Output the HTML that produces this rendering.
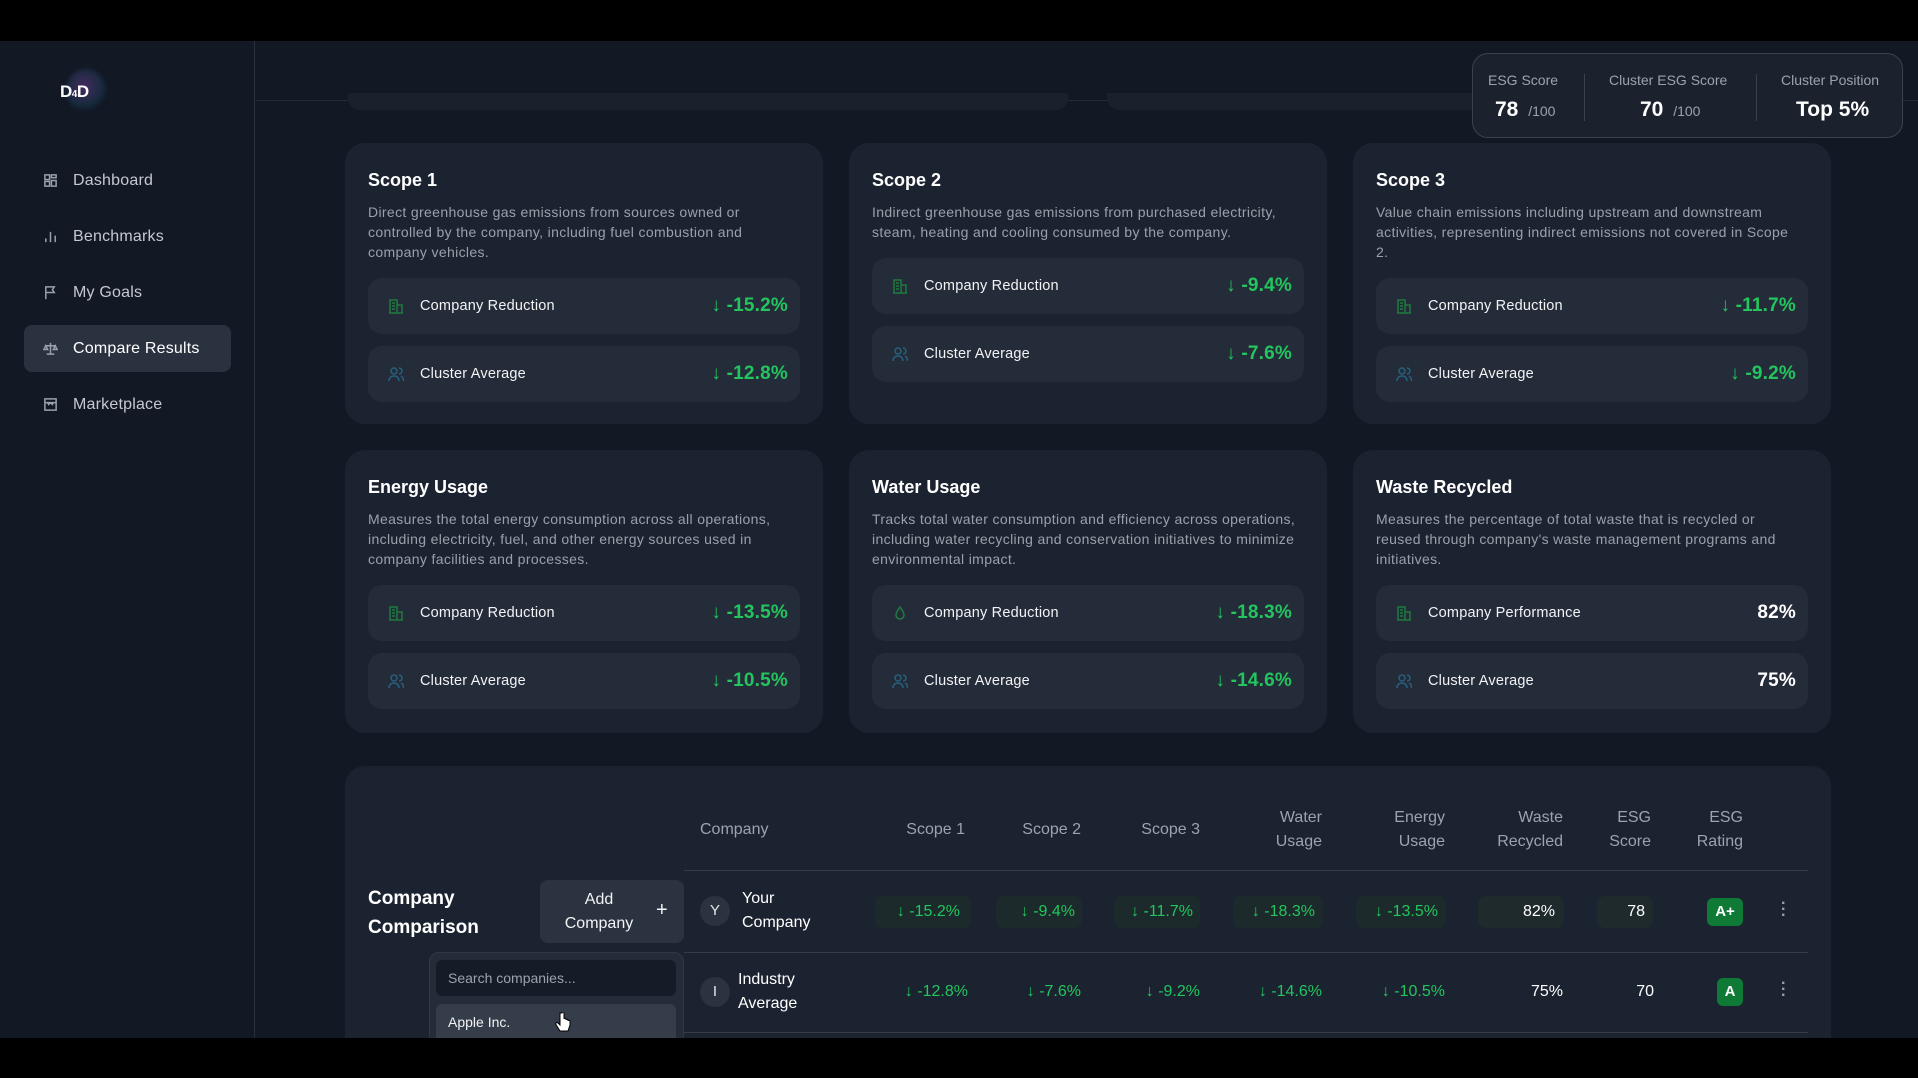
<!DOCTYPE html>
<html><head><meta charset="utf-8"><style>
*{box-sizing:border-box;margin:0;padding:0}
body{width:1918px;height:1078px;background:#000;font-family:"Liberation Sans",sans-serif;position:relative;overflow:hidden;color:#e5e7eb}
.abs{position:absolute}
#app{position:absolute;left:0;top:41px;width:1918px;height:997px;background:#121824;overflow:hidden}
.side{position:absolute;left:0;top:0;width:255px;height:997px;background:#121824;border-right:1px solid #283040}
.nav{position:absolute;left:24px;width:207px;height:47px;border-radius:8px;display:flex;align-items:center;padding-left:19px;font-size:16px;color:#c4c9d1;letter-spacing:.2px}
.nav svg{width:15px;height:15px;margin-right:15px;stroke:#9aa1ab;fill:none;stroke-width:1.6}
.nav.act{background:#2b323f;color:#fff}
.card{position:absolute;width:478px;background:#1c2330;border-radius:20px;padding:26px 23px 0 23px}
.card h3{font-size:18px;font-weight:bold;color:#fff;line-height:22px}
.card p{font-size:14px;line-height:20px;color:#9aa1ab;margin-top:11px;height:60px;width:425px;letter-spacing:.35px}
.card p.two{height:40px}
.row{height:56px;background:#252c39;border-radius:14px;margin-top:16px;display:flex;align-items:center;padding:0 12px 0 20px;font-size:14.5px;color:#f1f3f5;letter-spacing:.2px}
.row+.row{margin-top:12px}
.row svg{width:16px;height:16px;margin-right:16px;fill:none;stroke-width:1.5}
.row .v{margin-left:auto;font-size:19px;font-weight:bold;color:#22c55e}
.row .v.w{color:#fff}
.g{stroke:#1f7a3e}.b{stroke:#25607e}
.th{position:absolute;font-size:16px;color:#9ca3af;text-align:right;line-height:24px}
.td{position:absolute;font-size:16px;color:#22c55e;text-align:right}
.pill{position:absolute;height:32px;border-radius:8px;background:#1d2a2c}
</style></head><body>
<div id="app">
<div class="side">
  <div class="abs" style="left:66px;top:28px;width:40px;height:44px;border-radius:50%;background:radial-gradient(circle at 45% 40%,rgba(150,70,190,.4),rgba(40,120,160,.2) 55%,transparent 72%);filter:blur(2px)"></div>
  <div class="abs" style="left:60px;top:41px;font-size:17px;font-weight:bold;color:#fff;letter-spacing:-0.5px">D<span style="font-size:10px">4</span>D</div>
  <div class="nav" style="top:116px"><svg viewBox="0 0 16 16"><rect x="2" y="2" width="5" height="5"/><rect x="9" y="2" width="5" height="3"/><rect x="2" y="9" width="5" height="5"/><rect x="9" y="8" width="5" height="6"/></svg>Dashboard</div>
  <div class="nav" style="top:172px"><svg viewBox="0 0 16 16"><path d="M3 14v-4M8 14V3M13 14V7"/></svg>Benchmarks</div>
  <div class="nav" style="top:228px"><svg viewBox="0 0 16 16"><path d="M3 15V2h9l-2 3 2 3H3"/></svg>My Goals</div>
  <div class="nav act" style="top:284px"><svg viewBox="0 0 16 16"><path d="M8 2v12M4 14h8M2 5h12M3 5l-2 4h4zM13 5l-2 4h4z"/></svg>Compare Results</div>
  <div class="nav" style="top:340px"><svg viewBox="0 0 16 16"><rect x="2" y="2" width="12" height="12"/><path d="M2 6h12M5 6l1 2 2-2 2 2 1-2"/></svg>Marketplace</div>
</div>
<div class="abs" style="left:256px;top:59px;width:1662px;height:1px;background:#242b38"></div>
<div class="abs" style="left:348px;top:52px;width:720px;height:17px;border-radius:0 0 12px 12px;background:#1a202c"></div>
<div class="abs" style="left:1107px;top:52px;width:400px;height:17px;border-radius:0 0 0 12px;background:#1a202c"></div>

<div class="abs" style="left:1472px;top:12px;width:431px;height:85px;background:#1b222e;border:1px solid #3a4250;border-radius:16px">
  <div class="abs" style="left:15px;top:18px;font-size:14px;color:#9ca3af">ESG Score</div>
  <div class="abs" style="left:22px;top:44px;font-size:21px;font-weight:bold;color:#fff">78 <span style="font-size:14px;font-weight:normal;color:#9ca3af;margin-left:4px">/100</span></div>
  <div class="abs" style="left:111px;top:20px;width:1px;height:47px;background:#3a4250"></div>
  <div class="abs" style="left:136px;top:18px;font-size:14px;color:#9ca3af">Cluster ESG Score</div>
  <div class="abs" style="left:167px;top:44px;font-size:21px;font-weight:bold;color:#fff">70 <span style="font-size:14px;font-weight:normal;color:#9ca3af;margin-left:4px">/100</span></div>
  <div class="abs" style="left:283px;top:20px;width:1px;height:47px;background:#3a4250"></div>
  <div class="abs" style="left:308px;top:18px;font-size:14px;color:#9ca3af">Cluster Position</div>
  <div class="abs" style="left:323px;top:44px;font-size:21px;font-weight:bold;color:#fff">Top 5%</div>
</div>

<!-- cards -->
<div class="card" style="left:345px;top:102px;height:281px"><h3>Scope 1</h3><p>Direct greenhouse gas emissions from sources owned or controlled by the company, including fuel combustion and company vehicles.</p>
<div class="row"><svg viewBox="0 0 16 16" class="g"><path d="M2 15V2h7v13M9 7h5v8M1 15h14M4 5h3M4 8h3M4 11h3"/></svg>Company Reduction<span class="v">↓ -15.2%</span></div>
<div class="row"><svg viewBox="0 0 16 16" class="b"><circle cx="6" cy="5" r="3"/><path d="M1 15c0-3 2-5 5-5s5 2 5 5M11 2a3 3 0 010 6M13 10c1.5.7 2.5 2.5 2.5 5"/></svg>Cluster Average<span class="v">↓ -12.8%</span></div></div>
<div class="card" style="left:849px;top:102px;height:281px"><h3>Scope 2</h3><p class="two">Indirect greenhouse gas emissions from purchased electricity, steam, heating and cooling consumed by the company.</p>
<div class="row"><svg viewBox="0 0 16 16" class="g"><path d="M2 15V2h7v13M9 7h5v8M1 15h14M4 5h3M4 8h3M4 11h3"/></svg>Company Reduction<span class="v">↓ -9.4%</span></div>
<div class="row"><svg viewBox="0 0 16 16" class="b"><circle cx="6" cy="5" r="3"/><path d="M1 15c0-3 2-5 5-5s5 2 5 5M11 2a3 3 0 010 6M13 10c1.5.7 2.5 2.5 2.5 5"/></svg>Cluster Average<span class="v">↓ -7.6%</span></div></div>
<div class="card" style="left:1353px;top:102px;height:281px"><h3>Scope 3</h3><p>Value chain emissions including upstream and downstream activities, representing indirect emissions not covered in Scope 2.</p>
<div class="row"><svg viewBox="0 0 16 16" class="g"><path d="M2 15V2h7v13M9 7h5v8M1 15h14M4 5h3M4 8h3M4 11h3"/></svg>Company Reduction<span class="v">↓ -11.7%</span></div>
<div class="row"><svg viewBox="0 0 16 16" class="b"><circle cx="6" cy="5" r="3"/><path d="M1 15c0-3 2-5 5-5s5 2 5 5M11 2a3 3 0 010 6M13 10c1.5.7 2.5 2.5 2.5 5"/></svg>Cluster Average<span class="v">↓ -9.2%</span></div></div>

<div class="card" style="left:345px;top:409px;height:283px"><h3>Energy Usage</h3><p>Measures the total energy consumption across all operations, including electricity, fuel, and other energy sources used in company facilities and processes.</p>
<div class="row"><svg viewBox="0 0 16 16" class="g"><path d="M2 15V2h7v13M9 7h5v8M1 15h14M4 5h3M4 8h3M4 11h3"/></svg>Company Reduction<span class="v">↓ -13.5%</span></div>
<div class="row"><svg viewBox="0 0 16 16" class="b"><circle cx="6" cy="5" r="3"/><path d="M1 15c0-3 2-5 5-5s5 2 5 5M11 2a3 3 0 010 6M13 10c1.5.7 2.5 2.5 2.5 5"/></svg>Cluster Average<span class="v">↓ -10.5%</span></div></div>
<div class="card" style="left:849px;top:409px;height:283px"><h3>Water Usage</h3><p>Tracks total water consumption and efficiency across operations, including water recycling and conservation initiatives to minimize environmental impact.</p>
<div class="row"><svg viewBox="0 0 16 16" class="g"><path d="M8 2C6 5 4 7 4 10a4 4 0 008 0c0-3-2-5-4-8z"/></svg>Company Reduction<span class="v">↓ -18.3%</span></div>
<div class="row"><svg viewBox="0 0 16 16" class="b"><circle cx="6" cy="5" r="3"/><path d="M1 15c0-3 2-5 5-5s5 2 5 5M11 2a3 3 0 010 6M13 10c1.5.7 2.5 2.5 2.5 5"/></svg>Cluster Average<span class="v">↓ -14.6%</span></div></div>
<div class="card" style="left:1353px;top:409px;height:283px"><h3>Waste Recycled</h3><p>Measures the percentage of total waste that is recycled or reused through company's waste management programs and initiatives.</p>
<div class="row"><svg viewBox="0 0 16 16" class="g"><path d="M2 15V2h7v13M9 7h5v8M1 15h14M4 5h3M4 8h3M4 11h3"/></svg>Company Performance<span class="v w">82%</span></div>
<div class="row"><svg viewBox="0 0 16 16" class="b"><circle cx="6" cy="5" r="3"/><path d="M1 15c0-3 2-5 5-5s5 2 5 5M11 2a3 3 0 010 6M13 10c1.5.7 2.5 2.5 2.5 5"/></svg>Cluster Average<span class="v w">75%</span></div></div>

<!-- table card -->
<div class="abs" style="left:345px;top:725px;width:1486px;height:400px;background:#1c2330;border-radius:20px"></div>
<div class="abs" style="left:368px;top:843px;font-size:19px;font-weight:bold;color:#fff;line-height:29px">Company<br>Comparison</div>
<div class="abs" style="left:540px;top:839px;width:144px;height:63px;background:#2b3340;border-radius:8px;color:#f1f3f5;font-size:16px;line-height:24px">
  <div class="abs" style="left:0;width:118px;top:8px;text-align:center">Add<br>Company</div>
  <div class="abs" style="left:116px;top:18px;font-size:20px">+</div></div>
<div class="abs" style="left:429px;top:911px;width:255px;height:140px;background:#252c39;border-radius:10px;border:1px solid #303846"></div>
<div class="abs" style="left:436px;top:919px;width:240px;height:36px;background:#161c27;border-radius:6px;font-size:14px;color:#9ca3af;padding:10px 12px">Search companies...</div>
<div class="abs" style="left:436px;top:963px;width:240px;height:40px;background:#353d4a;border-radius:6px;font-size:14px;color:#f1f3f5;padding:10px 12px">Apple Inc.</div>
<svg class="abs" style="left:555px;top:971px" width="16" height="22" viewBox="0 0 16 22"><path d="M5 1v12l-2-2c-1-1-3 0-2 1.5L5 19h8l2-6V9c0-1-2-1-2 0V8c0-1-2-1-2 0V7c0-1-2-1-2 0V1c0-1.2-2-1.2-2 0z" fill="#fff" stroke="#000" stroke-width="1"/></svg>

<div class="abs" style="left:684px;top:829px;width:1124px;height:1px;background:#343c49"></div>
<div class="abs" style="left:684px;top:911px;width:1124px;height:1px;background:#343c49"></div>
<div class="abs" style="left:684px;top:991px;width:1124px;height:1px;background:#343c49"></div>

<div class="th" style="left:700px;top:777px;text-align:left">Company</div>
<div class="th" style="left:865px;width:100px;top:777px">Scope 1</div>
<div class="th" style="left:981px;width:100px;top:777px">Scope 2</div>
<div class="th" style="left:1100px;width:100px;top:777px">Scope 3</div>
<div class="th" style="left:1222px;width:100px;top:765px">Water<br>Usage</div>
<div class="th" style="left:1345px;width:100px;top:765px">Energy<br>Usage</div>
<div class="th" style="left:1463px;width:100px;top:765px">Waste<br>Recycled</div>
<div class="th" style="left:1551px;width:100px;top:765px">ESG<br>Score</div>
<div class="th" style="left:1643px;width:100px;top:765px">ESG<br>Rating</div>

<!-- row 1 -->
<div class="abs" style="left:700px;top:855px;width:30px;height:30px;border-radius:50%;background:#2b3340;color:#e5e7eb;font-size:15px;text-align:center;line-height:30px">Y</div>
<div class="abs" style="left:742px;top:846px;font-size:16px;color:#fff;line-height:24px">Your<br>Company</div>
<div class="pill" style="left:875px;top:855px;width:96px"></div>
<div class="pill" style="left:996px;top:855px;width:86px"></div>
<div class="pill" style="left:1114px;top:855px;width:86px"></div>
<div class="pill" style="left:1233px;top:855px;width:90px"></div>
<div class="pill" style="left:1356px;top:855px;width:90px"></div>
<div class="pill" style="left:1478px;top:855px;width:86px;background:#1f2a2c"></div>
<div class="pill" style="left:1597px;top:855px;width:56px;background:#1f2a2c"></div>
<div class="td" style="left:860px;width:100px;top:862px">↓ -15.2%</div>
<div class="td" style="left:975px;width:100px;top:862px">↓ -9.4%</div>
<div class="td" style="left:1093px;width:100px;top:862px">↓ -11.7%</div>
<div class="td" style="left:1215px;width:100px;top:862px">↓ -18.3%</div>
<div class="td" style="left:1338px;width:100px;top:862px">↓ -13.5%</div>
<div class="td" style="left:1455px;width:100px;top:862px;color:#fff">82%</div>
<div class="td" style="left:1545px;width:100px;top:862px;color:#fff">78</div>
<div class="abs" style="left:1707px;top:857px;width:36px;height:28px;background:#0e7a35;border-radius:6px;color:#fff;font-size:15px;font-weight:bold;text-align:center;line-height:28px">A+</div>
<div class="abs" style="left:1781px;top:860px;color:#9ca3af;font-size:16px;line-height:6px;font-weight:bold">·<br>·<br>·</div>
<!-- row 2 -->
<div class="abs" style="left:700px;top:936px;width:30px;height:30px;border-radius:50%;background:#2b3340;color:#e5e7eb;font-size:15px;text-align:center;line-height:30px">I</div>
<div class="abs" style="left:738px;top:927px;font-size:16px;color:#fff;line-height:24px">Industry<br>Average</div>
<div class="td" style="left:868px;width:100px;top:942px">↓ -12.8%</div>
<div class="td" style="left:981px;width:100px;top:942px">↓ -7.6%</div>
<div class="td" style="left:1100px;width:100px;top:942px">↓ -9.2%</div>
<div class="td" style="left:1222px;width:100px;top:942px">↓ -14.6%</div>
<div class="td" style="left:1345px;width:100px;top:942px">↓ -10.5%</div>
<div class="td" style="left:1463px;width:100px;top:942px;color:#fff">75%</div>
<div class="td" style="left:1554px;width:100px;top:942px;color:#fff">70</div>
<div class="abs" style="left:1717px;top:937px;width:26px;height:28px;background:#0e7a35;border-radius:6px;color:#fff;font-size:15px;font-weight:bold;text-align:center;line-height:28px">A</div>
<div class="abs" style="left:1781px;top:940px;color:#9ca3af;font-size:16px;line-height:6px;font-weight:bold">·<br>·<br>·</div>
</div>
</body></html>
